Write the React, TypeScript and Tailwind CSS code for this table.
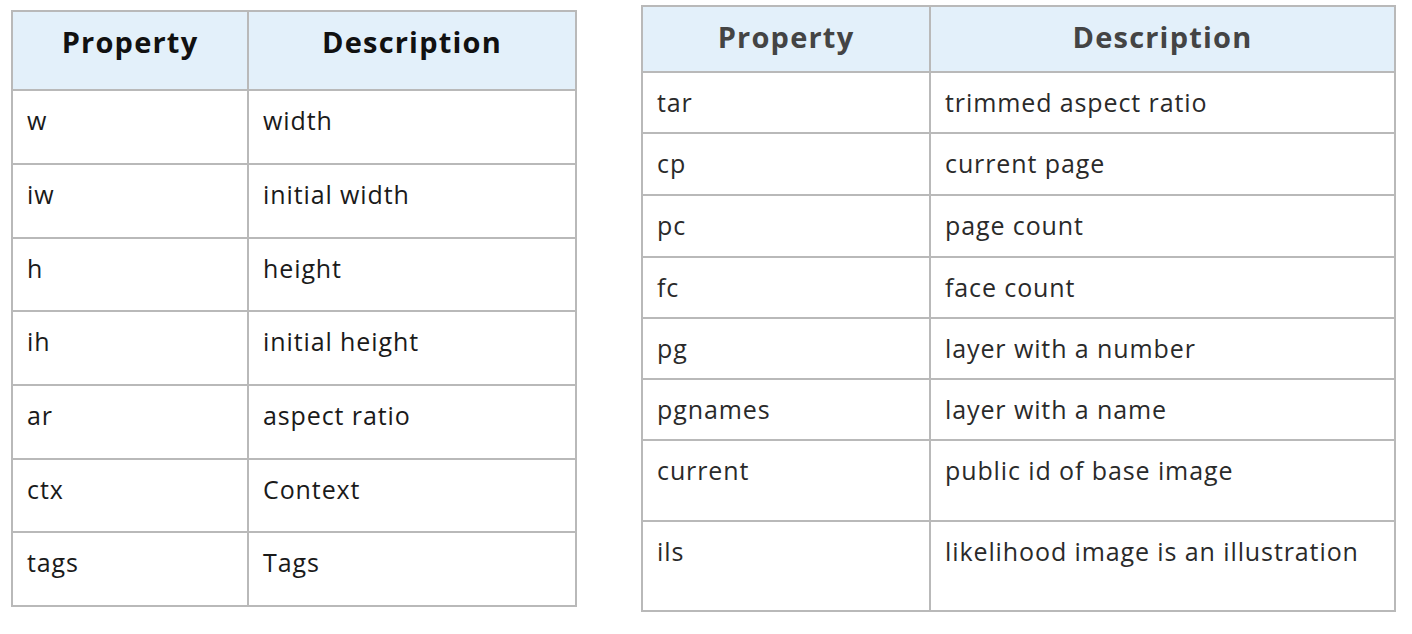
import React from 'react';

interface Row {
  prop: string;
  desc: string;
  h: string;
}

const leftRows: Row[] = [
  { prop: 'w', desc: 'width', h: 'h-[74px]' },
  { prop: 'iw', desc: 'initial width', h: 'h-[74px]' },
  { prop: 'h', desc: 'height', h: 'h-[73px]' },
  { prop: 'ih', desc: 'initial height', h: 'h-[74px]' },
  { prop: 'ar', desc: 'aspect ratio', h: 'h-[74px]' },
  { prop: 'ctx', desc: 'Context', h: 'h-[73px]' },
  { prop: 'tags', desc: 'Tags', h: 'h-[74px]' },
];

const rightRows: Row[] = [
  { prop: 'tar', desc: 'trimmed aspect ratio', h: 'h-[61px]' },
  { prop: 'cp', desc: 'current page', h: 'h-[62px]' },
  { prop: 'pc', desc: 'page count', h: 'h-[62px]' },
  { prop: 'fc', desc: 'face count', h: 'h-[61px]' },
  { prop: 'pg', desc: 'layer with a number', h: 'h-[61px]' },
  { prop: 'pgnames', desc: 'layer with a name', h: 'h-[61px]' },
  { prop: 'current', desc: 'public id of base image', h: 'h-[81px]' },
  { prop: 'ils', desc: 'likelihood image is an illustration', h: 'h-[90px]' },
];

const cell = 'border-b-2 border-r-2 border-[#b9b9b9]';

function PropTable({
  rows,
  cols,
  headH,
  headColor,
  bodyColor,
}: {
  rows: Row[];
  cols: string;
  headH: string;
  headColor: string;
  bodyColor: string;
}) {
  return (
    <div
      className={`grid border-l-2 border-t-2 border-[#b9b9b9] font-['Open_Sans','Liberation_Sans',sans-serif] ${cols}`}
    >
      {/* Header */}
      {['Property', 'Description'].map((label) => (
        <div
          key={label}
          className={`${cell} ${headH} flex justify-center bg-[#e3f0fa] pt-[12px] text-[29px] font-bold leading-[36px] tracking-[1.2px] ${headColor}`}
        >
          {label}
        </div>
      ))}

      {/* Body */}
      {rows.map((r) => (
        <React.Fragment key={r.prop}>
          <div className={`${cell} ${r.h} pl-[14px] pt-[11px] text-[25px] leading-[36px] tracking-[0.9px] ${bodyColor}`}>
            {r.prop}
          </div>
          <div className={`${cell} ${r.h} pl-[14px] pt-[11px] text-[25px] leading-[36px] tracking-[0.9px] ${bodyColor}`}>
            {r.desc}
          </div>
        </React.Fragment>
      ))}
    </div>
  );
}

export default function App() {
  return (
    <div className="flex h-[634px] w-[1412px] items-start gap-[64px] bg-white pl-[11px]">
      <div className="mt-[10px]">
        <PropTable
          rows={leftRows}
          cols="grid-cols-[236px_328px]"
          headH="h-[79px]"
          headColor="text-[#111111]"
          bodyColor="text-[#1a1a1a]"
        />
      </div>
      <div className="mt-[5px]">
        <PropTable
          rows={rightRows}
          cols="grid-cols-[288px_465px]"
          headH="h-[66px]"
          headColor="text-[#444444]"
          bodyColor="text-[#2a2a2a]"
        />
      </div>
    </div>
  );
}
